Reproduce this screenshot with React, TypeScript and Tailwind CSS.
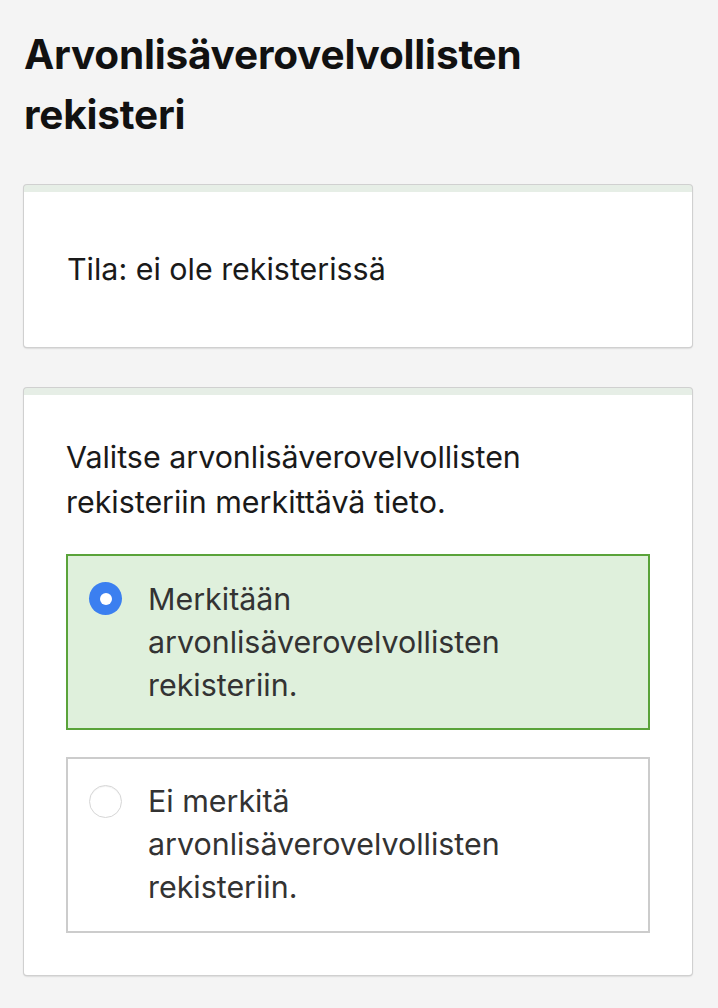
import React from "react";

export default function App() {
  return (
    <div className="min-h-[1008px] bg-[#f4f4f4] px-[24px] pt-[25px] pb-[30px]" style={{ fontFamily: "Inter, 'Liberation Sans', sans-serif" }}>
      <h1 className="text-[40.5px] font-bold leading-[60px] text-[#111] tracking-[-0.2px]">
        Arvonlisäverovelvollisten
        <br />
        rekisteri
      </h1>
      <div className="mt-[40px] rounded-[3px] border-t-[7px] border-t-[#e6eee6] bg-white shadow-[0_1px_2px_rgba(0,0,0,0.3)] ring-1 ring-[#d0d0d0] px-[43px] py-[56px] w-[668px]">
        <p className="text-[30.4px] leading-[43px] text-[#1a1a1a]">Tila: ei ole rekisterissä</p>
      </div>
      <div className="mt-[41px] rounded-[3px] border-t-[7px] border-t-[#e6eee6] bg-white shadow-[0_1px_2px_rgba(0,0,0,0.3)] ring-1 ring-[#d0d0d0] pl-[42px] pr-[42px] pt-[40px] pb-[42px] w-[668px]">
        <p className="text-[30.4px] leading-[45px] text-[#1a1a1a]">
          Valitse arvonlisäverovelvollisten
          <br />
          rekisteriin merkittävä tieto.
        </p>
        <div className="mt-[29px] flex flex-col gap-[27px]">
          <label className="flex items-start border-[2px] border-[#5aa33a] bg-[#dff0dc] px-[21px] pt-[22px] pb-[20px] h-[176px]">
            <span className="mt-[4px] flex h-[33px] w-[33px] shrink-0 items-center justify-center rounded-full bg-[#3b7ff0]">
              <span className="h-[12px] w-[12px] rounded-full bg-white" />
            </span>
            <span className="ml-[26px] text-[30.4px] leading-[43px] text-[#333]">
              Merkitään
              <br />
              arvonlisäverovelvollisten
              <br />
              rekisteriin.
            </span>
          </label>
          <label className="flex items-start border-[2px] border-[#cccccc] bg-white px-[21px] pt-[21px] pb-[20px] h-[176px]">
            <span className="mt-[5px] h-[33px] w-[33px] shrink-0 rounded-full border border-[#d6d6d6] bg-white shadow-[inset_0_1px_1px_rgba(0,0,0,0.05)]" />
            <span className="ml-[26px] text-[30.4px] leading-[43px] text-[#333]">
              Ei merkitä
              <br />
              arvonlisäverovelvollisten
              <br />
              rekisteriin.
            </span>
          </label>
        </div>
      </div>
    </div>
  );
}
